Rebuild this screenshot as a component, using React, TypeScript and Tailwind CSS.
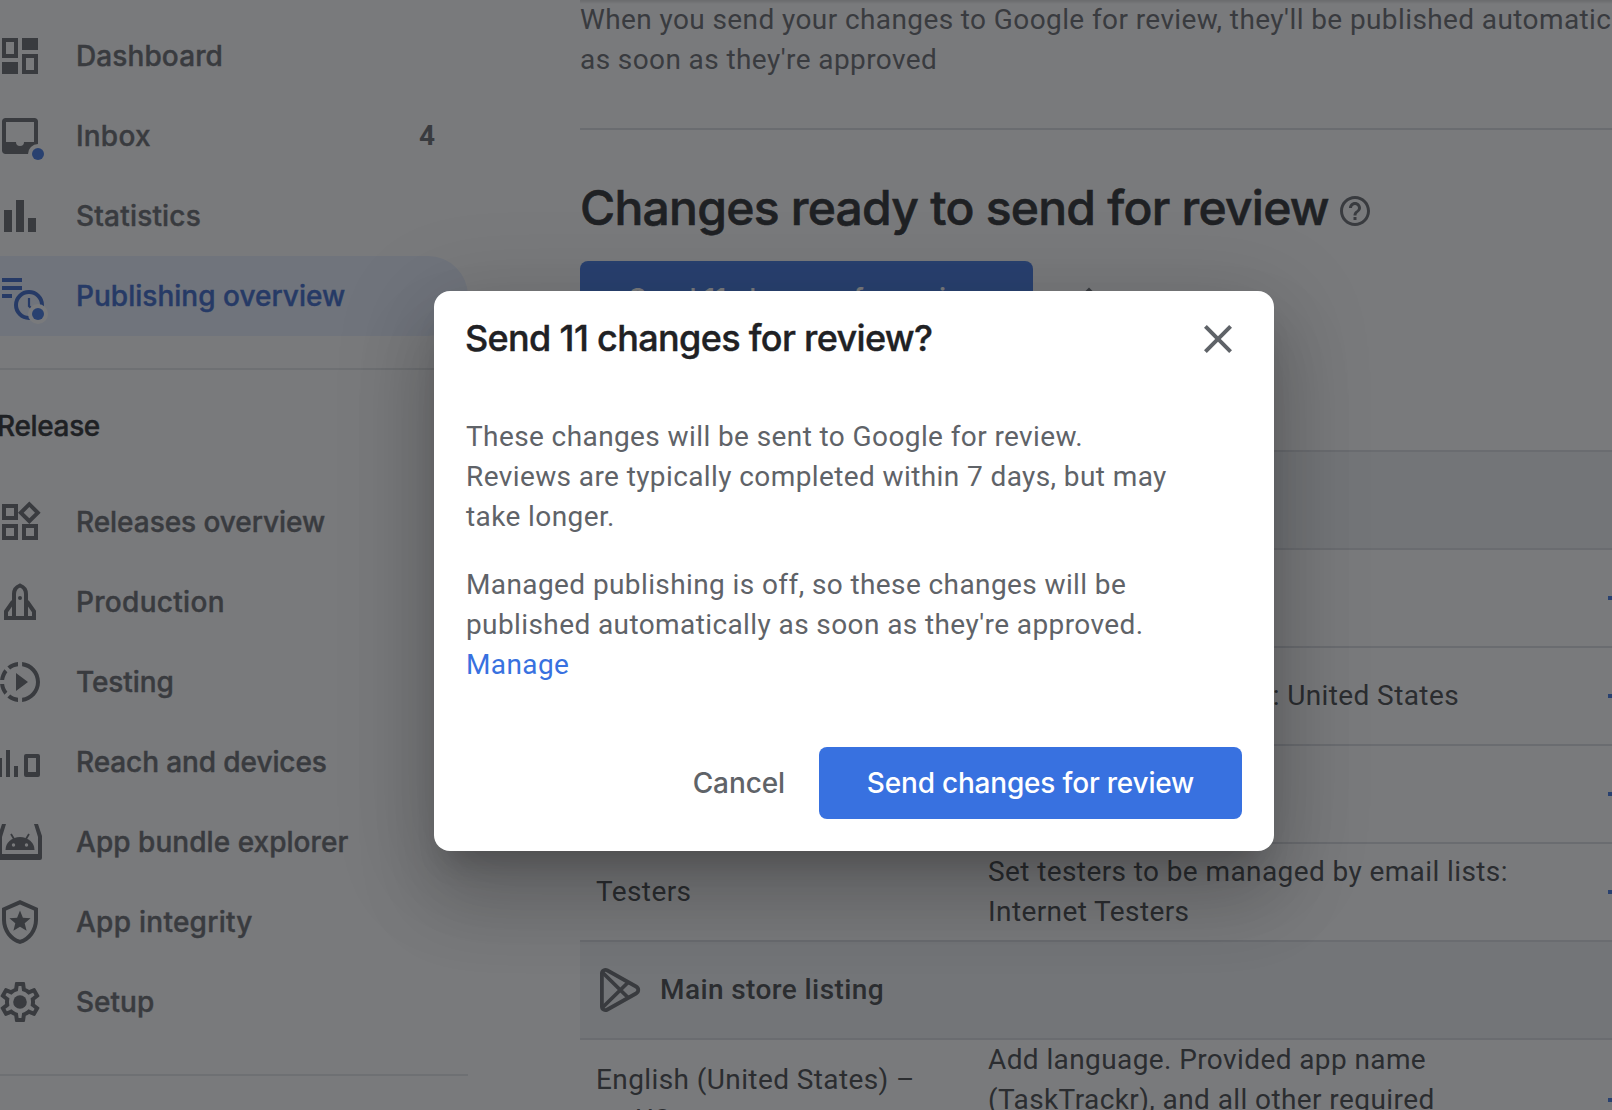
import type { ReactNode } from "react";

type NavItem = {
  label: string;
  icon: ReactNode;
  text: string;
  count?: string;
  active?: boolean;
};

function NavIcon({ children }: { children: ReactNode }) {
  return (
    <svg viewBox="0 0 48 48" className="-ml-1 size-12 shrink-0 overflow-visible fill-current">
      {children}
    </svg>
  );
}

const primaryNav: NavItem[] = [
  {
    label: "Dashboard",
    text: "ml-8 tracking-[0.1px]",
    icon: (
      <path
        fillRule="evenodd"
        d="M6 6h16v20H6zM10 10v12h8V10zM26 6h16v12H26zM6 30h16v12H6zM26 22h16v20H26zM30 26v12h8V26z"
      />
    ),
  },
  {
    label: "Inbox",
    text: "ml-8 tracking-[0.2px]",
    count: "4",
    icon: (
      <>
        <path
          fillRule="evenodd"
          d="M9.500 6h29c2 0 3.500 1.500 3.500 3.500v29c0 2-1.500 3.500-3.500 3.500h-29C7.500 42 6 40.500 6 38.500v-29C6 7.500 7.500 6 9.500 6zM10 10v20h10a4 4 0 0 0 8 0h10V10z"
        />
        <circle cx="42" cy="42" r="10" fill="#fff" />
        <circle cx="42" cy="42" r="6" fill="#3871e0" />
      </>
    ),
  },
  {
    label: "Statistics",
    text: "ml-8 tracking-[0.18px]",
    icon: <path d="M8 18h8v22H8zM20 8h8v32h-8zM32 26h8v14h-8z" />,
  },
  {
    label: "Publishing overview",
    text: "ml-8 tracking-[0.02px]",
    active: true,
    icon: (
      <>
        <path d="M6 6h20v4H6zM6 14h20v4H6zM6 22h10v4H6z" />
        <circle cx="33" cy="33" r="13" fill="#e8f0fe" stroke="currentColor" strokeWidth="4" />
        <path d="M33 26v8l5 5" fill="none" stroke="currentColor" strokeWidth="2.200" />
        <circle cx="42" cy="42" r="10" fill="#fff" />
        <circle cx="42" cy="42" r="6" fill="#3871e0" />
      </>
    ),
  },
];

const releaseNav: NavItem[] = [
  {
    label: "Releases overview",
    text: "ml-8 tracking-[-0.05px]",
    icon: (
      <g transform="scale(2)">
        <path d="M16.660 4.520l2.830 2.830-2.830 2.830-2.830-2.830 2.830-2.830M9 5v4H5V5h4m10 10v4h-4v-4h4M9 15v4H5v-4h4m7.660-13.310L11 7.340 16.660 13l5.660-5.660-5.660-5.650zM11 3H3v8h8V3zm10 10h-8v8h8v-8zm-10 0H3v8h8v-8z" />
      </g>
    ),
  },
  {
    label: "Production",
    text: "ml-8 tracking-[0.3px]",
    icon: (
      <>
        <path
          d="M18 40V16c0-4 2-7 6-8.500 4 1.500 6 4.500 6 8.500v24M17 23.500L10 33.500V40h28v-6.500L31 23.500"
          fill="none"
          stroke="currentColor"
          strokeWidth="4"
        />
        <circle cx="24" cy="20" r="2" />
      </>
    ),
  },
  {
    label: "Testing",
    text: "ml-8 tracking-[-0.1px]",
    icon: (
      <g transform="scale(2)">
        <path d="M10 7.500v9l6-4.500zM11 4.070V2.050c-2.010.2-3.840 1-5.320 2.210L7.100 5.690c1.110-.86 2.440-1.440 3.900-1.620zM5.690 7.100L4.260 5.680C3.050 7.160 2.250 8.990 2.050 11h2.020c.18-1.460.76-2.790 1.620-3.900zM4.070 13H2.050c.2 2.010 1 3.840 2.210 5.320l1.430-1.430c-.86-1.100-1.440-2.430-1.620-3.890zm1.610 6.740C7.160 20.950 9 21.750 11 21.950v-2.020c-1.460-.18-2.790-.76-3.900-1.620l-1.420 1.430zM22 12c0 5.160-3.920 9.420-8.950 9.950v-2.020C16.970 19.410 20 16.050 20 12s-3.030-7.410-6.950-7.930V2.050C18.080 2.580 22 6.840 22 12z" />
      </g>
    ),
  },
  {
    label: "Reach and devices",
    text: "ml-8 tracking-[-0.1px]",
    icon: (
      <path
        fillRule="evenodd"
        d="M2 20h4v19H2zM10 12h4v27h-4zM18 28h4v11h-4zM30 16h12a2 2 0 0 1 2 2v19a2 2 0 0 1-2 2H30a2 2 0 0 1-2-2V18a2 2 0 0 1 2-2zM32 20v14h8V20z"
      />
    ),
  },
  {
    label: "App bundle explorer",
    text: "ml-8 tracking-[0.04px]",
    icon: (
      <>
        <path
          fillRule="evenodd"
          d="M6 6h4L6 19v17h36V19L38 6h4l4 12v22a2 2 0 0 1-2 2H4a2 2 0 0 1-2-2V18z"
        />
        <path d="M9.500 32a14.500 13 0 0 1 29 0z" />
        <path d="M15 16l3 5M33 16l-3 5" stroke="currentColor" strokeWidth="1.800" />
        <circle cx="17.500" cy="27" r="1.700" fill="#fff" />
        <circle cx="30.500" cy="27" r="1.700" fill="#fff" />
      </>
    ),
  },
  {
    label: "App integrity",
    text: "ml-8 tracking-[0.26px]",
    icon: (
      <g transform="scale(2)">
        <path d="M12 1L3 5v6c0 5.550 3.840 10.740 9 12 5.160-1.260 9-6.450 9-12V5l-9-4zm7 10c0 4.520-2.980 8.690-7 9.930-4.020-1.240-7-5.410-7-9.930V6.300l7-3.110 7 3.110V11z" />
        <path d="M12 6.300l1.450 3.550 3.850.3-2.950 2.500.95 3.750L12 14.350 8.700 16.400l.95-3.750-2.950-2.500 3.850-.3z" />
      </g>
    ),
  },
  {
    label: "Setup",
    text: "ml-8 tracking-[0px]",
    icon: (
      <g transform="scale(2)">
        <path d="M19.430 12.980c.04-.32.07-.64.07-.98 0-.34-.03-.66-.07-.98l2.110-1.650c.19-.15.24-.42.12-.64l-2-3.460c-.09-.16-.26-.25-.44-.25-.06 0-.12.01-.17.03l-2.490 1c-.52-.4-1.080-.73-1.690-.98l-.38-2.650C14.460 2.180 14.250 2 14 2h-4c-.25 0-.46.18-.49.42l-.38 2.650c-.61.25-1.170.59-1.690.98l-2.490-1c-.06-.02-.12-.03-.18-.03-.17 0-.34.09-.43.25l-2 3.460c-.13.22-.07.49.12.64l2.110 1.650c-.04.32-.07.65-.07.98 0 .33.03.66.07.98l-2.110 1.650c-.19.15-.24.42-.12.64l2 3.460c.09.16.26.25.44.25.06 0 .12-.01.17-.03l2.490-1c.52.4 1.080.73 1.690.98l.38 2.650c.03.24.24.42.49.42h4c.25 0 .46-.18.49-.42l.38-2.650c.61-.25 1.170-.59 1.690-.98l2.490 1c.06.02.12.03.18.03.17 0 .34-.09.43-.25l2-3.460c.12-.22.07-.49-.12-.64l-2.110-1.650zm-1.980-1.710c.04.31.05.52.05.73 0 .21-.02.43-.05.73l-.14 1.130.89.7 1.080.84-.7 1.210-1.270-.51-1.040-.42-.9.68c-.43.32-.84.56-1.250.73l-1.060.43-.16 1.130-.2 1.350h-1.400l-.19-1.350-.16-1.130-1.060-.43c-.43-.18-.83-.41-1.230-.71l-.91-.7-1.060.43-1.270.51-.7-1.210 1.080-.84.89-.7-.14-1.130c-.03-.31-.05-.54-.05-.74s.02-.43.05-.73l.14-1.130-.89-.7-1.080-.84.7-1.210 1.270.51 1.040.42.9-.68c.43-.32.84-.56 1.250-.73l1.060-.43.16-1.130.2-1.350h1.390l.19 1.350.16 1.130 1.060.43c.43.18.83.41 1.230.71l.91.7 1.060-.43 1.270-.51.7 1.210-1.070.85-.89.7.14 1.130z" />
        <circle cx="12" cy="12" r="3.400" />
      </g>
    ),
  },
];

function NavRow({ item }: { item: NavItem }) {
  return (
    <a
      className={
        item.active
          ? "flex h-20 items-center rounded-r-full bg-[#e8f0fe] text-[#3060c8]"
          : "flex h-20 items-center text-[#5f6368]"
      }
    >
      <NavIcon>{item.icon}</NavIcon>
      <span className={`whitespace-nowrap [-webkit-text-stroke:0.4px] ${item.text}`}>
        {item.label}
      </span>
      {item.count && (
        <span className="mr-[33px] ml-auto font-[Roboto,sans-serif] font-bold">{item.count}</span>
      )}
    </a>
  );
}

function Sidebar() {
  return (
    <nav className="w-[580px] shrink-0 pt-4 text-[28px] leading-10 font-medium">
      <div className="w-[468px]">
        {primaryNav.map((item) => (
          <NavRow key={item.label} item={item} />
        ))}
        <div className="mt-8 h-0.5 bg-[#e3e5e8]" />
        <h2 className="-ml-[3px] flex h-28 items-center tracking-[-0.35px] text-[#202124] [-webkit-text-stroke:0.4px]">
          Release
        </h2>
        {releaseNav.map((item) => (
          <NavRow key={item.label} item={item} />
        ))}
        <div className="mt-8 h-0.5 bg-[#e3e5e8]" />
      </div>
    </nav>
  );
}

function ArrowForward() {
  return (
    <svg viewBox="0 0 24 24" className="size-12 fill-[#3871e0]">
      <path d="M12 4l-1.410 1.410L16.170 11H4v2h12.170l-5.580 5.590L12 20l8-8z" />
    </svg>
  );
}

function CategoryRow({ children }: { children?: ReactNode }) {
  return (
    <div className="flex h-[98px] items-center border-t-2 border-[#dadce0] bg-[#f1f3f4] pl-4 font-medium">
      {children}
    </div>
  );
}

function ChangeRow({
  name,
  detail,
  tall,
}: {
  name?: ReactNode;
  detail?: ReactNode;
  tall?: boolean;
}) {
  return (
    <div
      className={`grid grid-cols-[408px_612px_48px] items-center border-t-2 border-[#dadce0] ${
        tall ? "h-[120px]" : "h-[98px]"
      }`}
    >
      <div className="pl-4">{name}</div>
      <div>{detail}</div>
      <ArrowForward />
    </div>
  );
}

function PlayIcon() {
  return (
    <svg viewBox="0 0 48 48" className="size-12 fill-none stroke-[#5f6368] stroke-[3.800]">
      <path d="M5.900 7.500v33c0 3 3 4.500 5.600 3L40 27.500c3-1.800 3-5.200 0-7L11.500 4.500c-2.600-1.500-5.600 0-5.600 3z" />
      <path d="M6.500 6.500L32.500 32M6.500 41.500L32.500 16" />
    </svg>
  );
}

function Main() {
  return (
    <main className="relative min-w-0 flex-1 overflow-hidden text-[28px] leading-10">
      <div className="absolute inset-x-0 top-0 h-1 bg-linear-to-b from-black/15 to-transparent" />
      <p className="font-[Roboto,sans-serif] tracking-[0.4px] whitespace-nowrap text-[#5f6368]">
        When you send your changes to Google for review, they'll be published automatically
        <br />
        as soon as they're approved
      </p>
      <div className="mt-12 h-0.5 bg-[#dadce0]" />
      <div className="mt-[47px] flex h-[60px] items-center">
        <h1 className="pt-0.5 text-[48px] font-medium tracking-[-0.75px] whitespace-nowrap text-[#202124] [-webkit-text-stroke:0.6px]">
          Changes ready to send for review
        </h1>
        <svg viewBox="0 0 24 24" className="mt-2 ml-[8px] size-9 fill-[#5f6368]">
          <path d="M11 18h2v-2h-2v2zm1-16C6.480 2 2 6.480 2 12s4.480 10 10 10 10-4.480 10-10S17.520 2 12 2zm0 18c-4.410 0-8-3.590-8-8s3.590-8 8-8 8 3.590 8 8-3.590 8-8 8zm0-14c-2.210 0-4 1.790-4 4h2c0-1.100.9-2 2-2s2 .9 2 2c0 2-3 1.750-3 5h2c0-2.250 3-2.500 3-5 0-2.210-1.790-4-4-4z" />
        </svg>
      </div>
      <div className="mt-6 flex h-[72px] items-center">
        <button className="flex h-[72px] w-[453px] items-center justify-center rounded-lg bg-[#3871e0] pt-[3px] font-[450] tracking-[-0.26px] whitespace-nowrap text-white">
          Send 11 changes for review
        </button>
        <svg viewBox="0 0 24 24" className="ml-11 size-6 fill-[#5f6368]">
          <path d="M12 2.500L22 12.500 12 22.500 2 12.500z" />
        </svg>
      </div>
      <div className="mt-[117px] w-[1068px] font-[Roboto,sans-serif] tracking-[0.4px] whitespace-nowrap text-[#3c4043]">
        <CategoryRow />
        <ChangeRow />
        <ChangeRow
          detail={<div className="w-[471px] text-right">: United States</div>}
        />
        <ChangeRow />
        <ChangeRow
          name="Testers"
          detail={
            <>
              Set testers to be managed by email lists:
              <br />
              Internet Testers
            </>
          }
        />
        <CategoryRow>
          <PlayIcon />
          <span className="ml-4">Main store listing</span>
        </CategoryRow>
        <ChangeRow
          tall
          name={
            <>
              English (United States) –
              <br />
              en-US
            </>
          }
          detail={
            <>
              Add language. Provided app name
              <br />
              (TaskTrackr), and all other required
              <br />
              fields
            </>
          }
        />
      </div>
    </main>
  );
}

function ConfirmDialog() {
  return (
    <div
      role="dialog"
      className="w-[840px] rounded-2xl bg-white px-8 pt-6 pb-8 text-[28px] leading-10 shadow-[0_22px_30px_-14px_rgba(0,0,0,0.2),0_48px_76px_6px_rgba(0,0,0,0.14),0_18px_92px_16px_rgba(0,0,0,0.12)]"
    >
      <header className="flex h-12 items-center justify-between">
        <h2 className="-ml-px pb-0.5 text-[36px] font-medium tracking-[-0.66px] whitespace-nowrap text-[#202124] [-webkit-text-stroke:0.4px]">
          Send 11 changes for review?
        </h2>
        <svg viewBox="0 0 24 24" className="size-12 fill-[#5f6368]">
          <path d="M19 6.410L17.590 5 12 10.590 6.410 5 5 6.410 10.590 12 5 17.590 6.410 19 12 13.410 17.590 19 19 17.590 13.410 12z" />
        </svg>
      </header>
      <div className="mt-[54px] flex flex-col gap-7 font-[Roboto,sans-serif] tracking-[0.4px] whitespace-nowrap text-[#5f6368]">
        <p>
          These changes will be sent to Google for review.
          <br />
          Reviews are typically completed within 7 days, but may
          <br />
          take longer.
        </p>
        <p>
          Managed publishing is off, so these changes will be
          <br />
          published automatically as soon as they're approved.
          <br />
          <a className="text-[#3871e0]">Manage</a>
        </p>
      </div>
      <footer className="mt-[62px] flex items-center justify-end">
        <button className="mr-[34px] font-[450] tracking-[-0.1px] text-[#5f6368]">
          Cancel
        </button>
        <button className="flex h-[72px] w-[423px] items-center justify-center rounded-lg bg-[#3871e0] font-[450] tracking-[-0.2px] whitespace-nowrap text-white">
          Send changes for review
        </button>
      </footer>
    </div>
  );
}

export default function App() {
  return (
    <div className="relative flex h-[1110px] w-[1612px] overflow-hidden bg-white font-[Inter,sans-serif]">
      <Sidebar />
      <Main />
      <div className="absolute inset-0 flex items-start bg-[rgba(32,33,36,0.6)] pt-[291px] pl-[434px]">
        <ConfirmDialog />
      </div>
    </div>
  );
}
